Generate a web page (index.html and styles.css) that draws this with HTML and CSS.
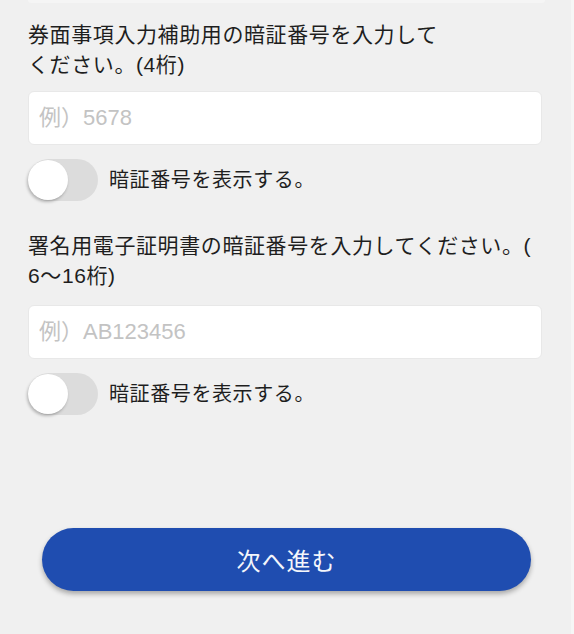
FILE: index.html
```
<!DOCTYPE html>
<html lang="ja">

<head>
    <meta charset="UTF-8">
    <meta name="viewport" content="width=574, height=634, user-scalable=no">
    <title>暗証番号入力</title>
    <link rel="stylesheet" href="styles.css">
</head>

<body>
    <div class="page">
        <!-- bottom edge of the field above, scrolled off -->
        <div class="prev-field"></div>

        <!-- 券面事項入力補助用 -->
        <div class="pin-block">
            <p class="pin-label">券面事項入力補助用の暗証番号を入力して<br>ください。(4桁)</p>
            <input class="pin-input" type="password" placeholder="例）5678">
            <label class="toggle-row">
                <span class="toggle"><span class="knob"></span></span>
                <span class="toggle-text">暗証番号を表示する。</span>
            </label>
        </div>

        <!-- 署名用電子証明書 -->
        <div class="pin-block second">
            <p class="pin-label">署名用電子証明書の暗証番号を入力してください。(<br>6～16桁)</p>
            <input class="pin-input" type="password" placeholder="例）AB123456">
            <label class="toggle-row">
                <span class="toggle"><span class="knob"></span></span>
                <span class="toggle-text">暗証番号を表示する。</span>
            </label>
        </div>

        <button class="next-btn">次へ進む</button>
    </div>
</body>

</html>
```

FILE: styles.css
```
html,
body {
    margin: 0;
    padding: 0;
    height: 100%;
    background: #f0f0f0;
    font-family: "Liberation Sans", "Noto Sans CJK JP", sans-serif;
    color: #1e1e1e;
}

.page {
    width: 574px;
    height: 634px;
    box-sizing: border-box;
    border-right: 3px solid #f6f6f6;
    padding: 0 29px 0 28px;
    display: flex;
    flex-direction: column;
    overflow: hidden;
}

.prev-field {
    height: 3px;
    margin-right: -3px;
    background: #f5f5f5;
    border-radius: 0 0 4px 4px;
}

.pin-block {
    display: flex;
    flex-direction: column;
    padding-top: 17px;
}

.pin-block.second {
    padding-top: 30px;
}

.pin-label {
    margin: 0;
    font-size: 21px;
    line-height: 30px;
    letter-spacing: 0.6px;
}

.pin-input {
    margin-top: 11px;
    height: 54px;
    box-sizing: border-box;
    border: 1px solid #e8e8e8;
    border-radius: 6px;
    background: #ffffff;
    padding: 0 10px;
    font-family: inherit;
    font-size: 22px;
    color: #222;
    outline: none;
}

.second .pin-input {
    margin-top: 14px;
}

.pin-input::placeholder {
    color: #c3c3c3;
}

.toggle-row {
    display: flex;
    align-items: center;
    gap: 11px;
    margin-top: 14px;
}

.toggle {
    width: 70px;
    height: 42px;
    border-radius: 21px;
    background: #dcdcdc;
    display: flex;
    align-items: center;
}

.knob {
    width: 40px;
    height: 40px;
    border-radius: 50%;
    background: #ffffff;
    box-shadow: -1px 2px 3px rgba(0, 0, 0, 0.25);
}

.toggle-text {
    font-size: 20px;
    letter-spacing: 0.6px;
    padding-bottom: 4px;
}

.next-btn {
    margin: 113px 11px 0 14px;
    height: 63px;
    border: none;
    border-radius: 32px;
    background: #1f4db0;
    color: #f4f6fb;
    font-family: inherit;
    font-size: 24px;
    letter-spacing: 1px;
    box-shadow: 0 3px 5px rgba(0, 0, 0, 0.3);
    cursor: pointer;
}
```
